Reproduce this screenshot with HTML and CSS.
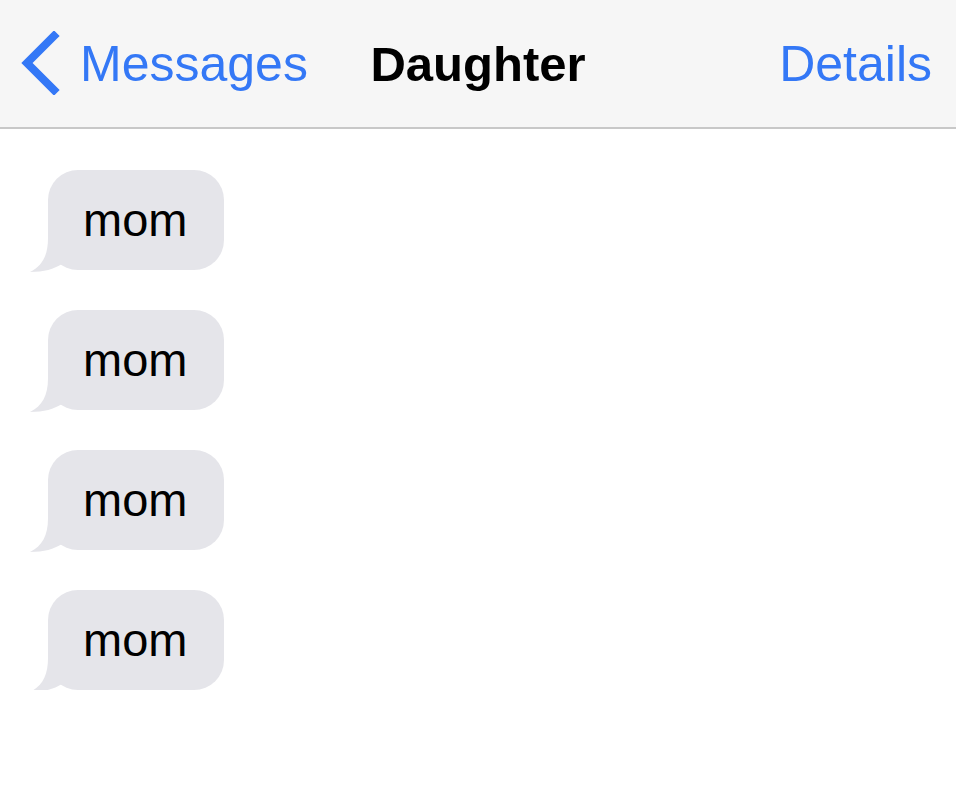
FILE: index.html
```html
<!DOCTYPE html>
<html lang="en">
<head>
  <meta charset="UTF-8" />
  <meta name="viewport" content="width=device-width, initial-scale=1.0" />
  <title>Daughter</title>
  <link rel="stylesheet" href="styles.css">
</head>
<body>
  <div class="navbar">
    <a class="back" href="#">
      <svg class="chevron" width="40" height="64" viewBox="0 0 40 64">
        <path d="M34 5 L7 32 L34 59" fill="none" stroke="#3478f6" stroke-width="8" stroke-linecap="square" stroke-linejoin="miter"/>
      </svg>
      <span>Messages</span>
    </a>
    <div class="title">Daughter</div>
    <a class="details" href="#">Details</a>
  </div>

  <div class="thread">
    <div class="bubble">mom
      <svg class="tail" width="50" height="35" viewBox="0 0 50 35">
        <path d="M20 0 C20 18 14 28 2 34 C16 34 26 31 34 26 L46 26 L46 0 Z" fill="#e5e5ea"/>
      </svg>
    </div>
    <div class="bubble">mom
      <svg class="tail" width="50" height="35" viewBox="0 0 50 35">
        <path d="M20 0 C20 18 14 28 2 34 C16 34 26 31 34 26 L46 26 L46 0 Z" fill="#e5e5ea"/>
      </svg>
    </div>
    <div class="bubble">mom
      <svg class="tail" width="50" height="35" viewBox="0 0 50 35">
        <path d="M20 0 C20 18 14 28 2 34 C16 34 26 31 34 26 L46 26 L46 0 Z" fill="#e5e5ea"/>
      </svg>
    </div>
    <div class="bubble">mom
      <svg class="tail" width="50" height="35" viewBox="0 0 50 35">
        <path d="M20 0 C20 18 14 28 2 34 C16 34 26 31 34 26 L46 26 L46 0 Z" fill="#e5e5ea"/>
      </svg>
    </div>
  </div>
</body>
</html>
```

FILE: styles.css
```css
html, body {
  margin: 0;
  padding: 0;
}
body {
  font-family: "Liberation Sans", Arial, sans-serif;
  background: white;
}
.navbar {
  height: 127px;
  background: #f6f6f6;
  border-bottom: 2px solid #c8c8c8;
  display: flex;
  align-items: center;
  justify-content: space-between;
  padding: 0 24px 0 20px;
  position: relative;
  box-sizing: content-box;
}
.navbar a {
  color: #3478f6;
  text-decoration: none;
  font-size: 50px;
}
.back {
  display: flex;
  align-items: center;
  gap: 20px;
}
.chevron {
  display: block;
  margin-top: -2px;
}
.title {
  position: absolute;
  left: 0;
  right: 0;
  text-align: center;
  font-size: 49px;
  font-weight: bold;
  color: black;
  pointer-events: none;
}
.thread {
  display: flex;
  flex-direction: column;
  align-items: flex-start;
  gap: 40px;
  padding: 41px 0 0 48px;
}
.bubble {
  position: relative;
  height: 100px;
  line-height: 100px;
  padding: 0 37px 0 35px;
  font-size: 47px;
  color: black;
  background: #e5e5ea;
  border-radius: 30px;
}
.tail {
  position: absolute;
  left: -20px;
  bottom: -3px;
}
```
